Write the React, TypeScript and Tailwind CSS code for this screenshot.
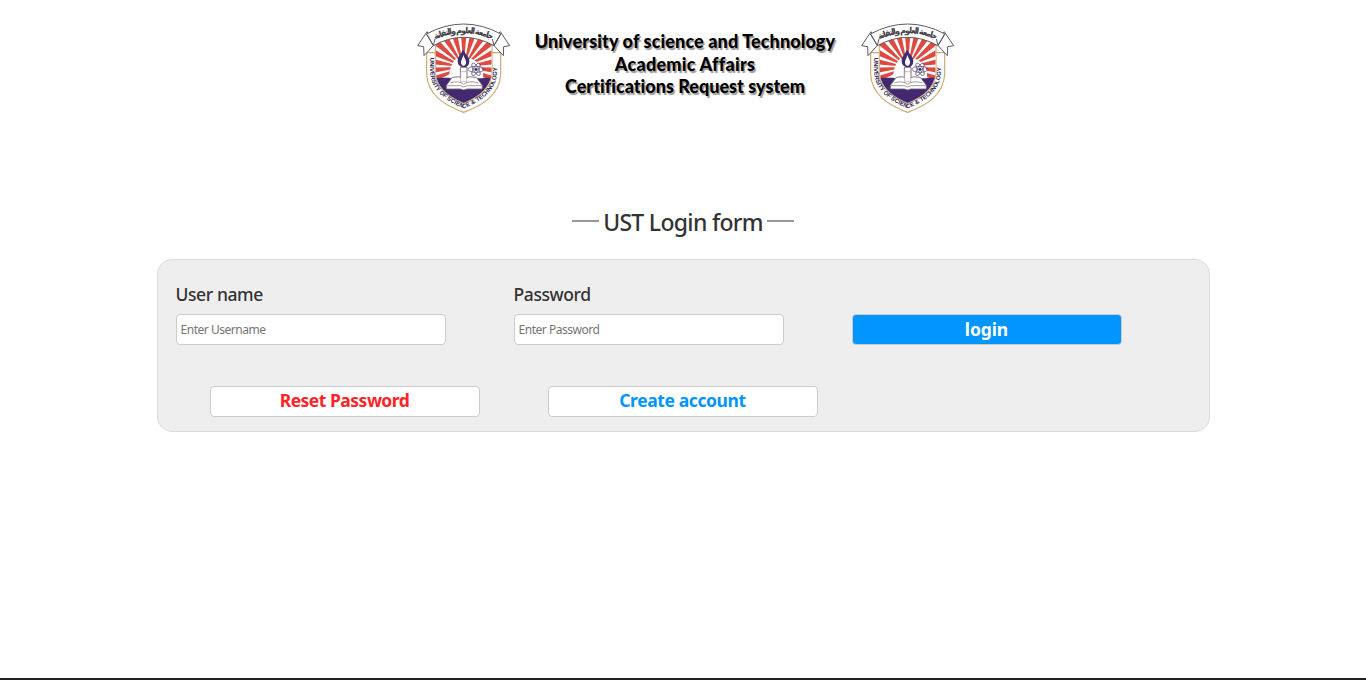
const rays = Array.from({ length: 15 }, (_, i) => {
  const a = (-112 + i * 16) * (Math.PI / 180);
  const w = 0.085;
  const p = (t: number) => `${164 + Math.sin(t) * 160},${156 - Math.cos(t) * 160}`;
  return `164,156 ${p(a - w)} ${p(a + w)}`;
});

function Crest({ id }: { id: string }) {
  return (
    <svg viewBox="0 0 330 315" className="h-[105px] w-[110px] shrink-0" aria-label="University crest">
      <defs>
        <clipPath id={`${id}-shield`}>
          <path d="M80 70 Q164 32 248 70 V172 Q244 232 164 264 Q84 232 80 172Z" />
        </clipPath>
        <path id={`${id}-motto`} d="M64 128 V172 C66 226 110 258 164 280 C220 258 262 226 264 172 V126" />
        <path id={`${id}-arabic`} d="M68 78 Q164 31 260 78" />
      </defs>
      <path d="M53 113 H79 V92 H249 V113 H275 V178 C272 240 222 270 164 292 C106 270 56 240 53 178Z" fill="#fff" stroke="#c9a978" strokeWidth="3.5" />
      <path d="M79 110 V172 Q83 235 164 266 Q245 235 249 172 V110" fill="none" stroke="#d2b68c" strokeWidth="4" />
      <g clipPath={`url(#${id}-shield)`}>
        <rect x="70" y="45" width="190" height="225" fill="#fff" />
        {rays.map((points) => (
          <polygon key={points} points={points} fill="#df4a40" />
        ))}
        <path d="M78 188 H250 V268 H78Z" fill="#41286f" />
        <path d="M122 190 Q118 154 140 132 L188 132 Q226 148 222 190Z" fill="#fff" />
      </g>
      <path d="M162 103 C166 115 181 124 181 139 Q180 157 164 157 Q147 156 146 139 C146 124 158 116 162 103Z" fill="#3c2c72" />
      <path d="M163 119 C165 128 173 135 171 145 Q169 153 164 153 Q157 152 156 144 C155 135 162 128 163 119Z" fill="#fff8f2" />
      <path d="M154 157 H174 V197 Q164 190 154 197Z" fill="#fff" stroke="#66596d" strokeWidth="2.5" />
      <path d="M112 211 L130 187 Q150 181 164 192 Q180 181 202 187 L220 211 V222 H174 Q164 228 154 222 H112Z" fill="#fff" stroke="#69616e" strokeWidth="2.5" />
      <path d="M114 212 H153 Q164 220 175 212 H218 M124 204 Q148 195 164 208 Q180 195 208 204" fill="none" stroke="#716b76" strokeWidth="2" />
      <path d="M155 170 H173 V202 Q164 196 155 202Z" fill="#fff" stroke="#a77870" strokeWidth="1.5" />
      <g fill="none" stroke="#554b76" strokeWidth="2.2">
        <ellipse cx="201" cy="163" rx="24" ry="9" />
        <ellipse cx="201" cy="163" rx="21" ry="8" transform="rotate(60 201 163)" />
        <ellipse cx="201" cy="163" rx="21" ry="8" transform="rotate(-60 201 163)" />
        <circle cx="201" cy="163" r="4" fill="#39286a" />
      </g>
      <g fill="#fff" stroke="#5d5c64" strokeWidth="3" strokeLinejoin="round">
        <path d="M54 50 L26 92 L44 95 L45 122 L80 84Z" />
        <path d="M274 50 L302 92 L284 95 L283 122 L248 84Z" />
        <path d="M52 57 Q164 -3 276 57 L255 92 Q164 42 73 92Z" />
        <path d="M54 58 L73 91 L78 72 M274 58 L255 91 L250 72" fill="none" />
      </g>
      <text fontFamily="DejaVu Sans, sans-serif" fontSize="26" fontWeight="700" fill="#45434c">
        <textPath href={`#${id}-arabic`} startOffset="50%" textAnchor="middle" textLength="178">جامعة العلوم والتقانة</textPath>
      </text>
      <text fontFamily="Liberation Sans, sans-serif" fontSize="18" fontWeight="700" fill="#2e284d">
        <textPath href={`#${id}-motto`} textLength="372">UNIVERSITY OF SCIENCE &amp; TECHNOLOGY</textPath>
      </text>
    </svg>
  );
}

export default function App() {
  return (
    <div className="flex h-[680px] flex-col overflow-hidden border-b-2 border-[#202020] bg-white font-['Noto_Sans','Open_Sans',sans-serif] text-[#333]">
      <header className="flex h-[120px] pl-[409px] pt-[15px]">
        <Crest id="left" />
        <h1 className="mx-px mr-[3px] mt-[15px] w-[330px] whitespace-nowrap text-center font-['Lato',sans-serif] text-[18px] font-black leading-[22.5px] text-black [text-shadow:1.5px_1.5px_1px_#999]">
          <span className="block tracking-[0.12px]">University of science and Technology</span>
          <span className="block tracking-[0.25px]">Academic Affairs</span>
          <span className="block tracking-[0.02px]">Certifications Request system</span>
        </h1>
        <Crest id="right" />
      </header>
      <main className="mx-auto w-[1053px] pt-[83px]">
        <h2 className="flex h-[36px] items-center justify-center gap-[4px] whitespace-nowrap text-[23px] font-medium tracking-[-0.7px]">
          <span className="h-[2px] w-[27px] bg-[#999]" />
          <span className="pt-[2px]">UST Login form</span>
          <span className="h-[2px] w-[27px] bg-[#999]" />
        </h2>
        <form className="mt-5 h-[173px] rounded-[15px] border border-[#dcdcdc] bg-[#eee] pl-[18px] pt-[21px]" onSubmit={(e) => e.preventDefault()}>
          <div className="flex items-end gap-[68px]">
            <label className="block w-[270px] text-[17.5px] font-medium leading-[26px] tracking-[-0.4px]">
              User name
              <input className="mt-[7px] block h-[31px] w-full rounded-[4px] border border-[#ccc] bg-white px-1 text-[12px] font-normal tracking-[-0.48px] placeholder:text-[#757575]" placeholder="Enter Username" />
            </label>
            <label className="block w-[270px] text-[17.5px] font-medium leading-[26px] tracking-[-0.4px]">
              Password
              <input type="password" className="mt-[7px] block h-[31px] w-full rounded-[4px] border border-[#ccc] bg-white px-1 text-[12px] font-normal tracking-[-0.48px] placeholder:text-[#757575]" placeholder="Enter Password" />
            </label>
            <button className="h-[31px] w-[270px] rounded-[4px] border border-[#ccc] bg-[#0095ff] pb-[2px] text-[17.5px] font-bold leading-[26px] tracking-[-0.1px] text-white">login</button>
          </div>
          <div className="mt-[41px] flex gap-[68px] pl-[34px]">
            <button type="button" className="h-[31px] w-[270px] rounded-[4px] border border-[#ccc] bg-white pb-[3px] text-[17.5px] font-bold leading-[26px] tracking-[-0.5px] text-[#ff2429]">Reset Password</button>
            <button type="button" className="h-[31px] w-[270px] rounded-[4px] border border-[#ccc] bg-white pb-[3px] text-[17.5px] font-bold leading-[26px] tracking-[-0.4px] text-[#0095ff]">Create account</button>
          </div>
        </form>
      </main>
    </div>
  );
}
